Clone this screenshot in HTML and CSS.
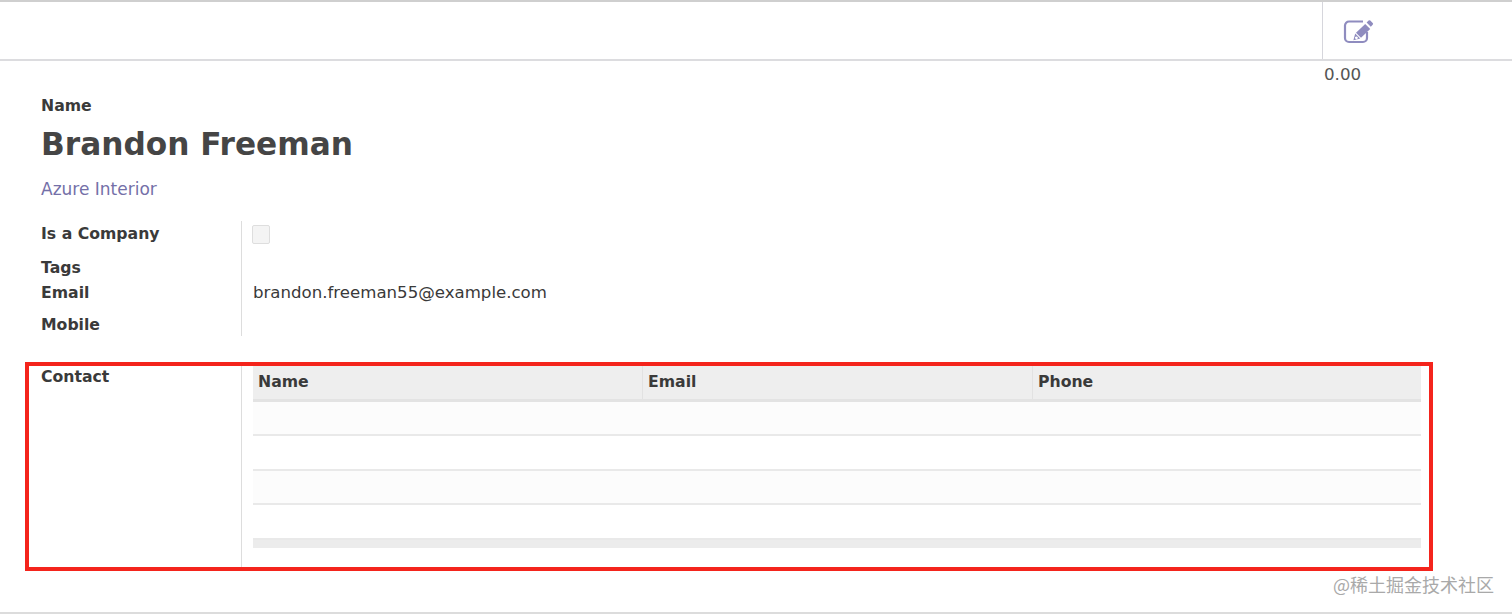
FILE: index.html
```html
<!DOCTYPE html>
<html lang="en">
<head>
<meta charset="utf-8">
<title>Brandon Freeman</title>
<link rel="stylesheet" href="styles.css">
</head>
<body>
<div class="page">
  <header class="topbar">
    <div class="stat-button">
      <svg class="edit-icon" viewBox="0 0 32 27" width="32" height="27" aria-hidden="true">
        <path class="edit-box" d="M20 3.5H6a4 4 0 0 0-4 4V20a4 4 0 0 0 4 4h14a4 4 0 0 0 4-4v-6"/>
        <path class="edit-pen" fill-rule="evenodd" d="M22.2 6l5 5-9.2 8.8-5-5zM12.2 15.6l5 5-6.8 1.6zM13.4 18.4a1.4 1.4 0 1 0 .01 0zM23.6 4.6l2-2a1.2 1.2 0 0 1 1.7 0l2.4 2.4a1.2 1.2 0 0 1 0 1.7l-1.9 2.1z"/>
      </svg>
    </div>
  </header>
  <div class="stat-row"><span class="stat-value">0.00</span></div>
  <main class="sheet">
    <div class="title-label">Name</div>
    <h1 class="title">Brandon Freeman</h1>
    <a class="company">Azure Interior</a>
    <div class="fields">
      <div class="field-label row-company">Is a Company</div>
      <div class="field-value row-company"><span class="checkbox"></span></div>
      <div class="field-label row-tags">Tags</div>
      <div class="field-value row-tags"></div>
      <div class="field-label row-email">Email</div>
      <div class="field-value row-email">brandon.freeman55@example.com</div>
      <div class="field-label row-mobile">Mobile</div>
      <div class="field-value row-mobile"></div>
    </div>
  </main>
  <section class="contact">
    <div class="contact-label">Contact</div>
    <div class="contact-body">
      <div class="grid-head">
        <div class="grid-cell">Name</div>
        <div class="grid-cell">Email</div>
        <div class="grid-cell">Phone</div>
      </div>
      <div class="grid-row odd"></div>
      <div class="grid-row"></div>
      <div class="grid-row odd"></div>
      <div class="grid-row"></div>
      <div class="grid-foot"></div>
    </div>
  </section>
  <div class="watermark">@稀土掘金技术社区</div>
</div>
</body>
</html>
```

FILE: styles.css
```css
* {
  box-sizing: border-box;
}

html,
body {
  margin: 0;
  padding: 0;
  background: #fff;
}

body {
  font-family: "DejaVu Sans", Verdana, sans-serif;
  color: #3a3a3a;
  overflow: hidden;
}

.page {
  position: relative;
  height: 614px;
  border-bottom: 2px solid #dcdcdc;
}

.topbar {
  height: 61px;
  display: flex;
  justify-content: flex-end;
  border-top: 2px solid #cfcfcf;
  border-bottom: 2px solid #dcdcdf;
}

.stat-button {
  width: 190px;
  border-left: 1px solid #d6d6dc;
  padding: 16px 0 0 20px;
}

.edit-icon {
  display: block;
}

.edit-box {
  fill: none;
  stroke: #8f8cbf;
  stroke-width: 2.2;
}

.edit-pen {
  fill: #8f8cbf;
}

.stat-row {
  display: flex;
  justify-content: flex-end;
  height: 26px;
}

.stat-value {
  width: 188px;
  font-size: 16.7px;
  line-height: 26px;
  color: #555;
}

.sheet {
  padding-left: 41px;
}

.title-label {
  margin-top: 9px;
  font-size: 15.7px;
  font-weight: bold;
  line-height: 20px;
}

.title {
  margin: 6px 0 0;
  font-size: 31.2px;
  font-weight: bold;
  line-height: 44px;
  color: #454545;
}

.company {
  display: block;
  margin-top: 12px;
  font-size: 17px;
  line-height: 22px;
  color: #7470a8;
}

.fields {
  display: grid;
  grid-template-columns: 200px 1fr;
  margin-top: 21px;
}

.field-label {
  font-size: 15.7px;
  font-weight: bold;
  line-height: 20px;
}

.field-value {
  border-left: 1px solid #dddddd;
  padding-left: 11px;
  font-size: 16.6px;
  line-height: 20px;
}

.row-company {
  height: 33px;
  padding-top: 3px;
}

.row-tags {
  height: 25px;
  padding-top: 4px;
}

.row-email {
  height: 32px;
  padding-top: 4px;
}

.row-mobile {
  height: 25px;
  padding-top: 4px;
}

.checkbox {
  display: block;
  width: 18px;
  height: 19px;
  margin: 1px 0 0 -1px;
  border: 1px solid #dedede;
  border-radius: 2px;
  background: #f4f4f4;
}

.contact {
  display: grid;
  grid-template-columns: 212px 1fr;
  width: 1408px;
  height: 209px;
  margin: 26px 0 0 25px;
  border: 4px solid #f4241c;
}

.contact-label {
  padding-left: 12px;
  font-size: 15.7px;
  font-weight: bold;
  line-height: 22px;
}

.contact-body {
  border-left: 1px solid #dddddd;
  padding: 0 8px 0 11px;
}

.grid-head {
  display: grid;
  grid-template-columns: 390px 390px 1fr;
  height: 36px;
  background: #eeeeee;
  border-bottom: 3px solid #e3e3e3;
}

.grid-cell {
  padding: 5px 0 0 5px;
  border-right: 1px solid #e2e2e2;
  font-size: 15.7px;
  font-weight: bold;
  line-height: 22px;
}

.grid-cell:last-child {
  border-right: 0;
}

.grid-row {
  height: 34.4px;
  border-bottom: 2px solid #e9e9e9;
}

.grid-row:last-of-type {
  border-bottom: 0;
}

.grid-row.odd {
  background: #fcfcfc;
}

.grid-foot {
  height: 8.5px;
  background: #ececec;
}

.watermark {
  position: absolute;
  right: 18px;
  top: 572px;
  font-family: "Noto Sans CJK SC", "DejaVu Sans", sans-serif;
  font-size: 18px;
  line-height: 24px;
  color: #a9a9a9;
}
```
